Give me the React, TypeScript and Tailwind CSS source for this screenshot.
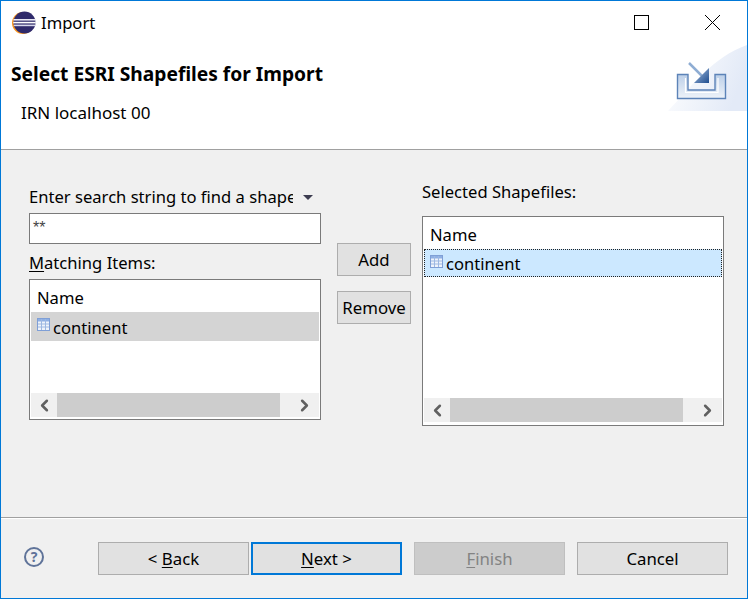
import type { ReactNode } from "react";
import { ChevronLeft, ChevronRight } from "lucide-react";

const font = { fontFamily: '"Noto Sans", sans-serif' };

function EclipseLogo() {
  return (
    <svg width="26" height="24" viewBox="0 0 26 24" className="shrink-0">
      <circle cx="12" cy="12" r="11" fill="#f7941e" />
      <circle cx="13.5" cy="11.5" r="11" fill="#2f2a6b" />
      <rect x="2.5" y="8" width="22" height="1.6" fill="#e8e8f4" />
      <rect x="2.2" y="10.8" width="22.6" height="1.6" fill="#ffffff" />
      <rect x="2.8" y="13.6" width="21.4" height="1.6" fill="#d8d8ec" />
    </svg>
  );
}

function TableIcon() {
  return (
    <svg width="13" height="13" viewBox="0 0 13 13" className="shrink-0">
      <rect x="0.5" y="0.5" width="12" height="12" fill="#eef3fb" stroke="#7f9fd6" />
      <rect x="1" y="1" width="11" height="2.5" fill="#8fb0e4" />
      <path d="M4.5 1v11M8.5 1v11M1 6h11M1 9h11" stroke="#9db8e2" strokeWidth="1" fill="none" />
    </svg>
  );
}

function ImportBanner() {
  return (
    <svg width="79" height="66" viewBox="0 0 79 66" className="mt-px shrink-0">
      <defs>
        <linearGradient id="wash" x1="0" y1="0" x2="1" y2="0.3">
          <stop offset="0" stopColor="#ffffff" />
          <stop offset="1" stopColor="#e3eaf7" />
        </linearGradient>
        <linearGradient id="tray" x1="0" y1="0" x2="0" y2="1">
          <stop offset="0" stopColor="#bccfe8" />
          <stop offset="1" stopColor="#eef3f9" />
        </linearGradient>
        <linearGradient id="arrow" x1="0" y1="0" x2="1" y2="1">
          <stop offset="0" stopColor="#a9c1e0" />
          <stop offset="1" stopColor="#1f4d8f" />
        </linearGradient>
      </defs>
      <path d="M0 66 C 25 40 45 12 79 0 L79 66 Z" fill="url(#wash)" />
      <path d="M9.5 29.5H20V45H47V29.5H57.5V53.5H9.5Z" fill="url(#tray)" stroke="#5c83b8" strokeWidth="1.4" />
      <path d="M17.5 33V47.5H50V33" fill="none" stroke="#ffffff" strokeWidth="1.2" />
      <path d="M21 18L36 33" stroke="#8fadd3" strokeWidth="2.5" fill="none" />
      <path d="M41 23V38H26Z" fill="url(#arrow)" />
    </svg>
  );
}

function DialogButton({
  children,
  width = "w-[151px]",
  variant = "normal",
}: {
  children: ReactNode;
  width?: string;
  variant?: "normal" | "default" | "disabled";
}) {
  const tone =
    variant === "default"
      ? "border-2 border-[#0078d7] bg-[#e1e1e1] text-black"
      : variant === "disabled"
        ? "border border-[#bfbfbf] bg-[#cccccc] text-[#838383]"
        : "border border-[#adadad] bg-[#e1e1e1] text-black";
  return (
    <div className={`flex h-[33px] items-center justify-center pt-[2px] text-[16.8px] ${width} ${tone}`}>
      <span className="leading-none">{children}</span>
    </div>
  );
}

function ShapeTable({
  selected,
  className,
  thumb,
  rowClass,
  scrollClass,
}: {
  selected?: boolean;
  className: string;
  thumb: string;
  rowClass: string;
  scrollClass: string;
}) {
  return (
    <div className={`flex flex-col border border-[#7a7a7a] bg-white ${className}`}>
      <div className="flex h-[32px] shrink-0 items-center pl-[7px] pt-[5px] text-[16.6px]">Name</div>
      <div
        className={`mx-px flex shrink-0 items-center gap-[3px] pt-[3px] text-[16.6px] ${rowClass} ${
          selected ? "border border-dotted border-[#222222] bg-[#cce8ff]" : "bg-[#d4d4d4]"
        }`}
      >
        <span className="-mt-[7px]">
          <TableIcon />
        </span>
        <span>continent</span>
      </div>
      <div className="flex-1" />
      <div className={`mx-px flex h-[24px] shrink-0 items-center bg-[#f0f0f0] ${scrollClass}`}>
        <div className="flex w-[26px] shrink-0 justify-center">
          <ChevronLeft size={19} strokeWidth={3.2} color="#606060" />
        </div>
        <div className={`h-full bg-[#cdcdcd] ${thumb}`} />
        <div className="flex flex-1 justify-end pr-[5px]">
          <ChevronRight size={19} strokeWidth={3.2} color="#606060" />
        </div>
      </div>
    </div>
  );
}

export default function App() {
  return (
    <div
      className="flex h-[599px] w-[748px] flex-col overflow-hidden border border-[#0078d7] bg-[#f0f0f0] text-black"
      style={font}
    >
      {/* title + banner */}
      <div className="h-[148px] shrink-0 bg-white">
        <div className="flex h-[43px] items-center pl-[10px]">
          <EclipseLogo />
          <span className="ml-[4px] pt-[2px] text-[16.6px]">Import</span>
          <div className="ml-auto flex items-center">
            <div className="h-[15px] w-[15px] border border-black" />
            <svg width="15" height="15" viewBox="0 0 15 15" className="ml-[56px] mr-[27px]">
              <path d="M0 0l15 15M15 0L0 15" stroke="#000" strokeWidth="1" />
            </svg>
          </div>
        </div>
        <div className="flex items-start justify-between">
          <div>
            <h1 className="pl-[10px] pt-[18px] text-[19.2px] font-bold leading-[24px]">
              Select ESRI Shapefiles for Import
            </h1>
            <p className="pl-[20px] pt-[16px] text-[17px] leading-[22px]">IRN localhost 00</p>
          </div>
          <ImportBanner />
        </div>
      </div>
      <div className="h-px shrink-0 bg-[#a0a0a0]" />

      {/* body */}
      <div className="flex h-[367px] shrink-0 items-start pl-[28px]">
        <div className="mt-[37px] flex w-[292px] flex-col">
          <div className="flex h-[20px] items-center text-[16.6px]">
            <span className="w-[264px] overflow-hidden whitespace-nowrap">
              Enter search string to find a shapefile
            </span>
            <svg width="10" height="5" viewBox="0 0 10 5" className="ml-[10px]">
              <path d="M0 0h10L5 5z" fill="#3c3c50" />
            </svg>
          </div>
          <div
            className="mt-[6px] flex h-[31px] items-center border border-[#7a7a7a] bg-white pb-px pl-[3px] text-[16px] text-[#444444]"
            style={{ fontFamily: '"Liberation Sans", sans-serif' }}
          >
            **
          </div>
          <div className="mt-[9px] h-[20px] text-[16.6px] leading-[20px]">
            <span className="underline underline-offset-2">M</span>atching Items:
          </div>
          <ShapeTable
            className="mt-[6px] h-[141px]"
            rowClass="h-[29px] pl-[6px]"
            scrollClass="mb-[2px]"
            thumb="w-[223px]"
          />
        </div>

        <div className="ml-[16px] mt-[93px] flex w-[74px] flex-col gap-[15px]">
          <DialogButton width="w-[74px]">Add</DialogButton>
          <DialogButton width="w-[74px]">Remove</DialogButton>
        </div>

        <div className="ml-[11px] mt-[32px] flex w-[302px] flex-col">
          <div className="h-[20px] text-[16.6px] leading-[20px]">Selected Shapefiles:</div>
          <ShapeTable
            selected
            className="mt-[14px] h-[210px]"
            rowClass="h-[28px] pl-[5px]"
            scrollClass="mb-[3px]"
            thumb="w-[233px]"
          />
        </div>
      </div>

      <div className="h-px shrink-0 bg-[#a0a0a0]" />
      <div className="h-px shrink-0 bg-white" />

      {/* footer */}
      <div className="flex flex-1 items-start pt-[23px]">
        <div className="ml-[23px] mt-[5px] flex h-[20px] w-[20px] items-center justify-center rounded-full border-2 border-[#5f7399] text-[14px] font-bold leading-none text-[#5f7399]">
          ?
        </div>
        <div className="ml-[54px] flex items-center">
          <DialogButton>
            &lt; <span className="underline underline-offset-2">B</span>ack
          </DialogButton>
          <div className="ml-[2px]">
            <DialogButton variant="default">
              <span className="underline underline-offset-2">N</span>ext &gt;
            </DialogButton>
          </div>
          <div className="ml-[12px]">
            <DialogButton variant="disabled">
              <span className="underline underline-offset-2">F</span>inish
            </DialogButton>
          </div>
          <div className="ml-[12px]">
            <DialogButton>Cancel</DialogButton>
          </div>
        </div>
      </div>
    </div>
  );
}
